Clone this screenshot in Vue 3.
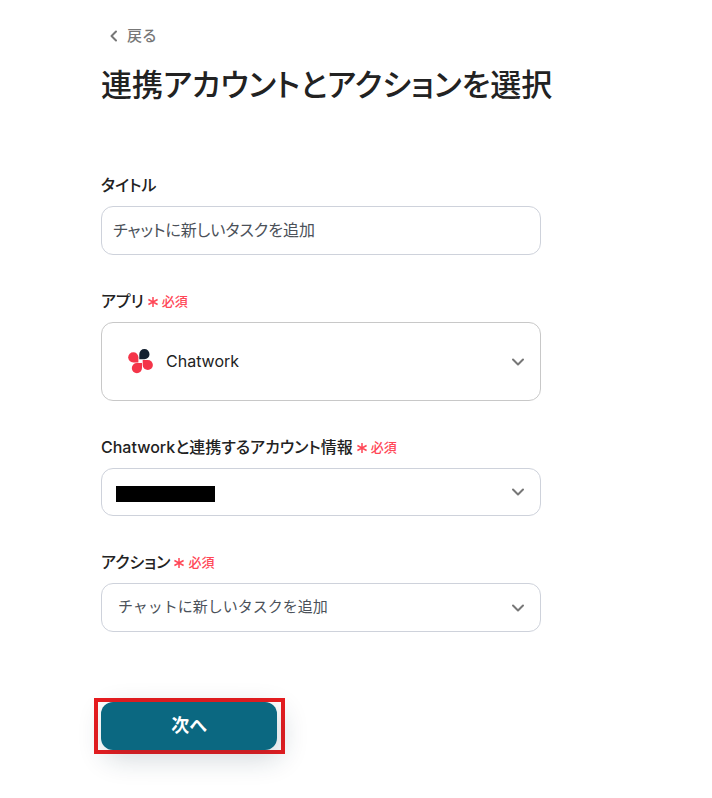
<script setup>
import { ref } from 'vue'

const title = ref('チャットに新しいタスクを追加')
const app = ref('Chatwork')
const account = ref('account')
const action = ref('チャットに新しいタスクを追加')
</script>

<template>
  <main class="page">
    <a class="back" href="#">
      <svg class="back-icon" viewBox="0 0 12 14" aria-hidden="true">
        <path d="M8 2.5 3.5 7 8 11.5" />
      </svg>
      戻る
    </a>
    <h1>連携アカウントとアクションを選択</h1>

    <form @submit.prevent>
      <div class="field">
        <div class="label-row"><label for="title">タイトル</label></div>
        <input id="title" v-model="title" class="control" type="text" />
      </div>

      <div class="field">
        <div class="label-row">
          <label for="app">アプリ</label>
          <span class="required">
            <svg viewBox="0 0 12 12" aria-hidden="true"><path d="M6 1v10M1.4 3.5l9.2 5M10.6 3.5l-9.2 5" /></svg>必須
          </span>
        </div>
        <div class="select-wrap">
          <select id="app" v-model="app" class="control app-select">
            <option>Chatwork</option>
          </select>
          <svg class="app-logo" viewBox="0 0 26 26" aria-hidden="true">
            <path fill="#13202f" d="M11.3 11.2V6.2a5.1 5.1 0 1 1 5.1 5.1z" />
            <path fill="#f43549" d="M10.4 14.4H5.3A5.1 5.1 0 1 1 10.4 9.3z" />
            <path fill="#f43549" d="M14.7 11.9h5.1a5.1 5.1 0 1 1-5.1 5.1z" />
            <path fill="#f43549" d="M14 15v5.1a5.1 5.1 0 1 1-5.1-5.1z" />
          </svg>
          <svg class="chevron" viewBox="0 0 14 10" aria-hidden="true"><path d="m2 2.5 5 5 5-5" /></svg>
        </div>
      </div>

      <div class="field">
        <div class="label-row">
          <label for="account">Chatworkと連携するアカウント情報</label>
          <span class="required">
            <svg viewBox="0 0 12 12" aria-hidden="true"><path d="M6 1v10M1.4 3.5l9.2 5M10.6 3.5l-9.2 5" /></svg>必須
          </span>
        </div>
        <div class="select-wrap">
          <select id="account" v-model="account" class="control account-select">
            <option value="account"></option>
          </select>
          <span class="redacted"></span>
          <svg class="chevron" viewBox="0 0 14 10" aria-hidden="true"><path d="m2 2.5 5 5 5-5" /></svg>
        </div>
      </div>

      <div class="field">
        <div class="label-row">
          <label for="action">アクション</label>
          <span class="required">
            <svg viewBox="0 0 12 12" aria-hidden="true"><path d="M6 1v10M1.4 3.5l9.2 5M10.6 3.5l-9.2 5" /></svg>必須
          </span>
        </div>
        <div class="select-wrap">
          <select id="action" v-model="action" class="control action-select">
            <option>チャットに新しいタスクを追加</option>
          </select>
          <svg class="chevron" viewBox="0 0 14 10" aria-hidden="true"><path d="m2 2.5 5 5 5-5" /></svg>
        </div>
      </div>

      <div class="highlight">
        <button class="next" type="submit">次へ</button>
      </div>
    </form>
  </main>
</template>

<style>
body {
  background: #fff;
}
</style>

<style scoped>
.page {
  box-sizing: border-box;
  max-width: 712px;
  padding: 25px 101px 45px;
  color: #222;
  font-family: Inter, "Noto Sans CJK JP", sans-serif;
  font-size: 16px;
  line-height: 24px;
  font-feature-settings: "palt";
}

.back {
  display: flex;
  align-items: center;
  gap: 7px;
  width: fit-content;
  padding-left: 7px;
  color: #777;
  font-size: 15px;
  font-weight: 500;
  line-height: 22px;
  font-feature-settings: normal;
  text-decoration: none;
}

.back-icon {
  width: 12px;
  height: 14px;
}

svg {
  flex: none;
}

.back-icon path,
.chevron path {
  fill: none;
  stroke: #777;
  stroke-width: 2;
  stroke-linecap: round;
  stroke-linejoin: round;
}

h1 {
  margin: 14px 0 65px;
  font-size: 31px;
  font-weight: 500;
  line-height: 48px;
  white-space: nowrap;
}

form {
  max-width: 440px;
}

.field {
  margin-bottom: 35px;
}

.label-row {
  display: flex;
  align-items: center;
  gap: 3px;
  margin-bottom: 10px;
  line-height: 22px;
  white-space: nowrap;
}

label {
  font-weight: 500;
}

.required {
  display: flex;
  align-items: center;
  gap: 3px;
  color: #ff4757;
  font-size: 13px;
  font-weight: 500;
  font-feature-settings: normal;
}

.required svg {
  width: 12px;
  height: 12px;
  margin-top: 2px;
}

.required path {
  fill: none;
  stroke: currentColor;
  stroke-width: 1.5;
}

.select-wrap {
  position: relative;
}

.control {
  display: block;
  box-sizing: border-box;
  width: 100%;
  height: 49px;
  margin: 0;
  padding: 0 11px 4px;
  border: 1px solid #ced2db;
  border-radius: 12px;
  appearance: none;
  background: #fff;
  color: #4b5159;
  font: inherit;
  font-feature-settings: "palt";
}

select.control {
  padding: 0 40px 2px 16px;
}

.select-wrap .account-select {
  height: 48px;
}

.select-wrap .action-select {
  font-size: 15px;
  font-feature-settings: normal;
}

.select-wrap .app-select {
  height: 79px;
  padding: 0 40px 2px 64px;
  border-color: #c8c8c8;
  color: #222;
}

.app-logo {
  position: absolute;
  top: 26px;
  left: 27px;
  width: 26px;
  height: 26px;
  pointer-events: none;
}

.redacted {
  position: absolute;
  top: 18px;
  left: 15px;
  width: 99px;
  height: 16px;
  background: #000;
  pointer-events: none;
}

.chevron {
  position: absolute;
  top: calc(50% - 5px);
  right: 16px;
  width: 14px;
  height: 10px;
  pointer-events: none;
}

.highlight {
  width: fit-content;
  margin: 66px 0 0 -7px;
  padding: 0 4px 0 3px;
  border: 4px solid #e81c1f;
}

.next {
  display: block;
  width: 176px;
  height: 48px;
  padding: 0;
  border: 0;
  border-radius: 12px;
  background: #0b6881;
  box-shadow: 4px 8px 28px rgb(20 50 70 / 20%);
  color: #fff;
  font: inherit;
  font-size: 18px;
  font-weight: 700;
}
</style>
